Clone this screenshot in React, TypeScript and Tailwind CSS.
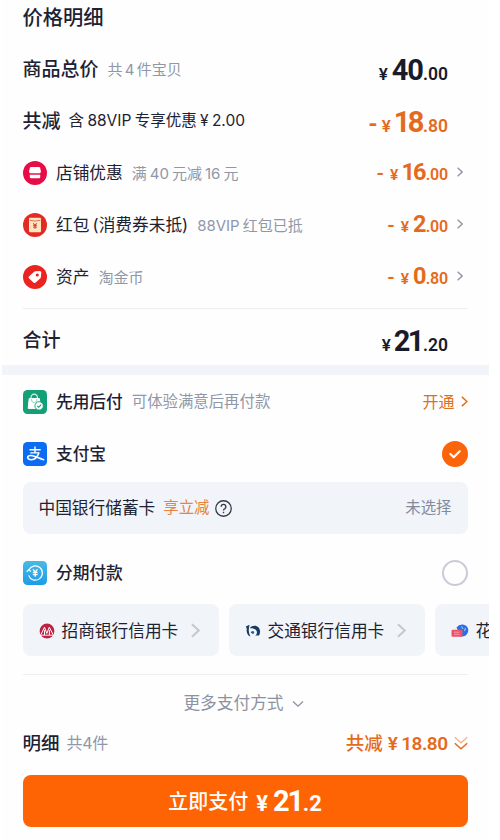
import type { ReactNode } from "react";
import clsx from "clsx";

function Chevron({ className }: { className?: string }) {
  return (
    <svg viewBox="0 0 6 10" fill="none" stroke="currentColor" className={className}>
      <path d="M0.6 0.8 5.2 5 0.6 9.2" strokeWidth="1.3" />
    </svg>
  );
}

function ShopIcon() {
  return (
    <svg viewBox="0 0 24 24" className="size-6 shrink-0">
      <circle cx="12" cy="12" r="12" fill="#e80c46" />
      <path
        d="M8 6h8a1.2 1.2 0 0 1 1.1.8l.8 3.4c.2 1.3-.6 2-1.5 2H7.6c-.9 0-1.7-.7-1.5-2l.8-3.4A1.2 1.2 0 0 1 8 6Z"
        fill="#fff"
      />
      <path d="M6.8 13.7h10.4v2.5a1 1 0 0 1-1 1H7.8a1 1 0 0 1-1-1Z" fill="#fff" />
      <path d="M6.8 13h10.4" stroke="#f0567f" strokeWidth="0.9" />
    </svg>
  );
}

function RedPacketIcon() {
  return (
    <svg viewBox="0 0 24 24" className="size-6 shrink-0">
      <circle cx="12" cy="12" r="12" fill="#e32a24" />
      <rect x="6" y="4.8" width="12" height="14.4" rx="1.2" fill="#fde5c0" />
      <path d="M6.5 7.2q5.5 1.8 11 0" stroke="#e4664a" strokeWidth="0.9" fill="none" />
      <path
        d="M10.2 10.4 12 12.3 13.8 10.4M12 12.3v3.5M10.2 12.6h3.6M10.2 14.2h3.6"
        stroke="#cf4a36"
        strokeWidth="1.1"
        fill="none"
      />
    </svg>
  );
}

function TagIcon() {
  return (
    <svg viewBox="0 0 24 24" className="size-6 shrink-0">
      <circle cx="12" cy="12" r="12" fill="#ea2420" />
      <path
        d="M12.2 6.3 16.8 6q1.5 0 1.5 1.5l-.4 4.6q0 .6-.5 1.1l-5 4.5q-.9.8-1.7 0L5.900 13.300q-.8-.9 0-1.7l5.2-4.9q.5-.4 1.1-.4Z"
        fill="#fff"
      />
      <circle cx="14.3" cy="10" r="1.6" fill="#ea2420" />
    </svg>
  );
}

function PayLaterIcon() {
  return (
    <svg viewBox="0 0 24 24" className="size-6 shrink-0">
      <rect width="24" height="24" rx="4.5" fill="#14a076" />
      <path d="M8 9V7.4a3.2 3.2 0 0 1 6.4 0V9" fill="none" stroke="#d9f3e8" strokeWidth="1.2" />
      <path d="M6.2 8.6h10.2l.9 9.8H5.2Z" fill="#fff" stroke="#fff" strokeLinejoin="round" />
      <path d="M8.5 9v.8a2.7 2.7 0 0 0 5.4 0V9" fill="none" stroke="#79c9ae" strokeWidth="0.8" />
      <circle cx="16.1" cy="15.9" r="4.2" fill="#fff" stroke="#14a076" strokeWidth="0.9" />
      <path d="m14.2 15.8 1.5 1.5 2.5-2.7" fill="none" stroke="#14a076" strokeWidth="1.1" />
    </svg>
  );
}

function AlipayIcon() {
  return (
    <svg viewBox="0 0 24 24" className="size-6 shrink-0">
      <rect width="24" height="24" rx="4.5" fill="#0d6df2" />
      <g fill="none" stroke="#fff" strokeLinecap="round">
        <path d="M7 7.8h10.2M12 5v5.8M7.8 10.9h7.8" strokeWidth="1.4" />
        <path
          d="M15.8 11c-1.3 3.7-4.2 6.7-7.4 6.7-2.2 0-3.7-.9-3.7-2.2 0-1.4 1.5-2 3.2-2 3.3 0 6.3 2.2 12.7 4.2"
          strokeWidth="1.6"
        />
      </g>
    </svg>
  );
}

function InstallmentIcon() {
  return (
    <svg viewBox="0 0 24 24" className="size-6 shrink-0">
      <defs>
        <linearGradient id="installment" x1="0" y1="0" x2="0" y2="1">
          <stop offset="0" stopColor="#4ab9e4" />
          <stop offset="1" stopColor="#1e9ce8" />
        </linearGradient>
      </defs>
      <rect width="24" height="24" rx="4.5" fill="url(#installment)" />
      <g fill="none" stroke="#fff">
        <path d="M5.8 9.2a7.1 7.1 0 1 1-.2 5.2" strokeWidth="1.2" />
        <path d="M3.7 10.8 5.7 8.6l2.2 2" strokeWidth="1.2" />
        <path d="M10 8.4 12.2 11l2.2-2.6M12.2 11v4.8M9.8 11.4h4.8M9.8 13.5h4.8" strokeWidth="1.3" />
      </g>
    </svg>
  );
}

function MerchantsBankLogo() {
  return (
    <svg viewBox="0 0 16 16" className="size-4 shrink-0">
      <circle cx="8" cy="8" r="7.4" fill="#bd2345" />
      <path
        d="M2 11.5 5.5 4.2 7.8 10.5 10.3 4.2 14 11.5M5.5 7.2V12M10.4 7.2V12"
        fill="none"
        stroke="#fff"
        strokeWidth="1"
      />
      <path d="M1.5 12.2h13" stroke="#fff" strokeWidth="0.9" />
    </svg>
  );
}

function CommunicationsBankLogo() {
  return (
    <svg viewBox="0 0 16 16" className="size-4 shrink-0">
      <path d="M.8 3.6 4.6 1.8C3.400 5.600 3.300 9.600 5.400 13.600 2.400 12.400 1.200 9.400 1.700 5.200Z" fill="#173a66" />
      <path
        d="M4.8 5.2C7 2.2 11.4 2 13.6 4.6c1.9 2.4 1.8 5.6.4 8H10.2c1.7-1.3 2.2-3.2 1.3-4.8C10.400 5.700 7.500 4.900 4.800 5.200Z"
        fill="#173a66"
      />
      <path d="M5.8 10C5.9 8.700 6.900 7.900 8.100 8.100c1.200.3 1.500 1.700.7 2.500-.4.4-1 .4-1.400.1C7.100 10.200 6.600 9.900 5.800 10Z" fill="#2f6287" />
    </svg>
  );
}

function HuabeiLogo() {
  return (
    <svg viewBox="0 0 18 16" className="h-4 w-[18px] shrink-0">
      <path d="M5.5 4.5Q8 1 12 1.5c4 .8 6 4 5 7.5-1 3.4-4 5-7 4.5Z" fill="#2b6fe0" />
      <path d="M10.5 3.5 12 6M14.5 5 13.5 8" stroke="#8fc3ff" strokeWidth="1.2" />
      <rect x="0.5" y="6.8" width="11" height="7" rx="1" fill="#ee5266" />
      <path d="M3 9.2h5.5M3 11.3h5.5" stroke="#f7a3ae" strokeWidth="0.9" />
    </svg>
  );
}

type AmountProps = {
  whole: string;
  cents: string;
  minus?: boolean;
  large?: boolean;
  className?: string;
};

function Amount({ whole, cents, minus, large, className }: AmountProps) {
  // the digit 1 leaves a wide gap on both sides, so close it up
  const narrow = whole.includes("1");

  return (
    <span
      className={clsx(
        "flex items-baseline font-[Roboto,sans-serif] leading-none font-bold",
        minus ? "text-[#e56b1c]" : "text-[#171b2b]",
        className
      )}
    >
      {minus && <span className={large ? "mr-[4px] text-[24px]" : "mr-[6px] text-[19px]"}>-</span>}
      <span className={clsx("font-semibold", large ? "text-[17px]" : "text-[15.5px]", narrow ? "mr-[3px]" : "mr-1")}>
        ¥
      </span>
      <span
        className={clsx(
          large ? "text-[29px]" : "text-[23.5px]",
          large && (narrow ? "tracking-[-2.5px]" : "tracking-[-1px]"),
          !large && (narrow ? "tracking-[-1.8px]" : "tracking-[-0.8px]")
        )}
      >
        {whole}
      </span>
      <span
        className={clsx(
          "font-semibold",
          large ? "text-[17.5px]" : "text-[16px] tracking-[-0.2px]",
          narrow && "ml-px"
        )}
      >
        .{cents}
      </span>
    </span>
  );
}

type DiscountRowProps = {
  icon: ReactNode;
  label: string;
  note: string;
  whole: string;
  cents: string;
};

function DiscountRow({ icon, label, note, whole, cents }: DiscountRowProps) {
  return (
    <div className="flex h-[52px] items-center">
      {icon}
      <span className="ml-[9.5px] text-[16.7px] [word-spacing:-1.5px]">{label}</span>
      <span className="ml-[9px] text-[15px] text-[#9097a8] [word-spacing:-1.2px]">{note}</span>
      <Amount whole={whole} cents={cents} minus className="ml-auto" />
      <Chevron className="mt-[-3px] mr-[4.5px] ml-[9px] h-[10px] w-[6px] text-[#8d93a1]" />
    </div>
  );
}

function BankCard({ logo, name }: { logo: ReactNode; name: string }) {
  return (
    <div className="flex h-[52px] w-[196px] shrink-0 items-center rounded-lg bg-[#f1f4f8] px-4 pt-px">
      {logo}
      <span className="ml-[7px] shrink-0 pt-[2px] text-[16.7px]">{name}</span>
      <Chevron className="ml-[13px] h-[15px] w-[9px] shrink-0 text-[#c3c8d0]" />
    </div>
  );
}

export default function App() {
  return (
    <main className="ml-[2px] h-[840px] w-[487px] overflow-hidden bg-[#fefefe] font-[Inter,'Noto_Sans_CJK_SC',sans-serif] leading-none whitespace-nowrap text-[#1d2233]">
      <section className="h-[365px] pr-[21.5px] pl-[20.5px]">
        <h1 className="flex h-[43px] items-start pt-2 text-[20.3px] font-medium">价格明细</h1>
        <div className="flex h-[52px] items-center">
          <span className="text-[19px] font-medium">商品总价</span>
          <span className="ml-[9px] text-[15px] text-[#9097a8] [word-spacing:-2px]">共 4 件宝贝</span>
          <Amount whole="40" cents="00" large className="mt-[3px] mr-[19.5px] ml-auto" />
        </div>
        <div className="flex h-[52px] items-center">
          <span className="text-[19px] font-medium">共减</span>
          <span className="ml-[8px] text-[15.5px] [word-spacing:-1px]">含 88VIP 专享优惠 ¥ 2.00</span>
          <Amount whole="18" cents="80" minus large className="mt-[3px] mr-[19.5px] ml-auto" />
        </div>
        <DiscountRow icon={<ShopIcon />} label="店铺优惠" note="满 40 元减 16 元" whole="16" cents="00" />
        <DiscountRow icon={<RedPacketIcon />} label="红包 (消费券未抵)" note="88VIP 红包已抵" whole="2" cents="00" />
        <DiscountRow icon={<TagIcon />} label="资产" note="淘金币" whole="0" cents="80" />
        <div className="mt-[5px] flex h-[57px] items-center border-t border-[#eceef1] pt-[6px]">
          <span className="text-[19px] font-medium">合计</span>
          <Amount whole="21" cents="20" large className="mt-[2px] mr-[19.5px] ml-auto" />
        </div>
      </section>

      <div className="h-[10px] bg-[#f1f4f8]" />

      <section className="pr-[21.5px] pl-[20.5px]">
        <div className="flex h-[53px] items-center">
          <PayLaterIcon />
          <span className="ml-[9.5px] pt-px text-[16.7px] font-medium">先用后付</span>
          <span className="ml-[9px] text-[15.4px] text-[#9097a8]">可体验满意后再付款</span>
          <span className="ml-auto text-[16px] text-[#dd701f]">开通</span>
          <Chevron className="ml-[6px] h-[11px] w-[7px] text-[#dd701f]" />
        </div>
        <div className="flex h-[51px] items-center">
          <AlipayIcon />
          <span className="ml-[9.5px] pt-px text-[16.7px] font-medium">支付宝</span>
          <svg viewBox="0 0 26 26" className="ml-auto size-[26px]">
            <circle cx="13" cy="13" r="13" fill="#fb640a" />
            <path
              d="m8.4 13 3.3 3.2 6-6"
              fill="none"
              stroke="#fff"
              strokeWidth="2.2"
              strokeLinecap="round"
              strokeLinejoin="round"
            />
          </svg>
        </div>
        <div className="mt-[3px] flex h-[52px] items-center rounded-lg bg-[#f1f4f8] px-4">
          <span className="text-[16.7px]">中国银行储蓄卡</span>
          <span className="ml-2 text-[15.4px] text-[#e88343]">享立减</span>
          <svg viewBox="0 0 16 16" fill="none" stroke="#343948" className="ml-[5px] size-[17px]">
            <circle cx="8" cy="8" r="7.3" strokeWidth="1.2" />
            <path d="M5.8 6.3a2.2 2.2 0 1 1 3.4 1.9C8.4 8.7 8 9 8 9.9" strokeWidth="1.3" />
            <path d="M8 11.1v1.3" strokeWidth="1.3" />
          </svg>
          <span className="ml-auto text-[15.4px] text-[#838a9d]">未选择</span>
        </div>
        <div className="mt-3 flex h-[53px] items-center">
          <InstallmentIcon />
          <span className="ml-[9.5px] pt-[2px] text-[16.7px] font-medium">分期付款</span>
          <span className="ml-auto size-[26px] rounded-full border-2 border-[#c9ccd8]" />
        </div>
        <div className="mt-[5px] -mr-[21.5px] flex gap-2.5 overflow-hidden">
          <BankCard logo={<MerchantsBankLogo />} name="招商银行信用卡" />
          <BankCard logo={<CommunicationsBankLogo />} name="交通银行信用卡" />
          <BankCard logo={<HuabeiLogo />} name="花" />
        </div>
        <div className="mt-[18px] flex h-[58px] items-center justify-center border-t border-[#eceef1] pr-[3px] text-[#8b92a4]">
          <span className="text-[16.7px]">更多支付方式</span>
          <svg viewBox="0 0 12 8" fill="none" stroke="currentColor" className="ml-2 h-2 w-3">
            <path d="m1 1.5 5 4.7 5-4.7" strokeWidth="1.3" />
          </svg>
        </div>
      </section>

      <footer className="pr-[21.5px] pl-[20.5px]">
        <div className="flex h-[22px] items-center">
          <span className="text-[18.5px] font-medium">明细</span>
          <span className="ml-[7px] text-[16px] tracking-[-0.3px] text-[#9097a8]">共4件</span>
          <span className="ml-auto flex items-center text-[18.5px] font-medium text-[#e56b1c]">
            共减
            <span className="ml-[5px] font-[Roboto,sans-serif] text-[19px] font-semibold tracking-[-0.5px] [word-spacing:-0.5px]">
              ¥ 18.80
            </span>
          </span>
          <svg viewBox="0 0 14 15" fill="none" className="ml-[6px] h-[15px] w-[14px]">
            <path d="m.8 1.3 6.2 5.5 6.2-5.5" stroke="#f3b48c" strokeWidth="1.3" />
            <path d="m.8 7.3 6.2 5.5 6.2-5.5" stroke="#e56b1c" strokeWidth="1.5" />
          </svg>
        </div>
        <button className="mt-[21px] flex h-[52px] w-full items-center justify-center rounded-lg bg-[#ff6404] text-white">
          <span className="pt-[2px] text-[20px] font-medium">立即支付</span>
          <span className="ml-2 flex items-baseline pt-px font-[Roboto,sans-serif] leading-none font-bold">
            <span className="mr-[5px] text-[22px]">¥</span>
            <span className="text-[29px] tracking-[-2.2px]">21</span>
            <span className="ml-px text-[22px]">.2</span>
          </span>
        </button>
      </footer>
    </main>
  );
}
